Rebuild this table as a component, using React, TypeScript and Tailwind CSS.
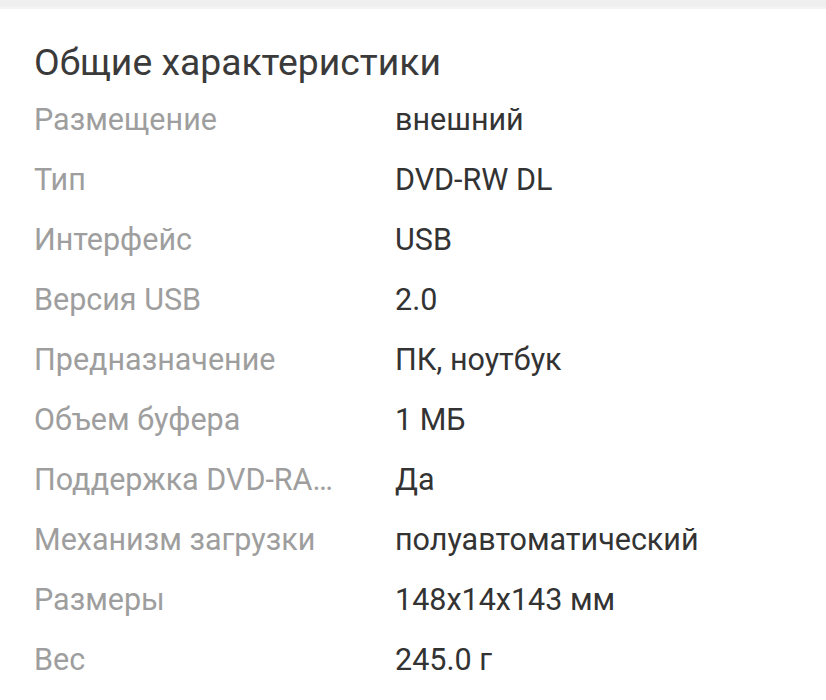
const rows: [string, string][] = [
  ["Размещение", "внешний"],
  ["Тип", "DVD-RW DL"],
  ["Интерфейс", "USB"],
  ["Версия USB", "2.0"],
  ["Предназначение", "ПК, ноутбук"],
  ["Объем буфера", "1 МБ"],
  ["Поддержка DVD-RAM", "Да"],
  ["Механизм загрузки", "полуавтоматический"],
  ["Размеры", "148x14x143 мм"],
  ["Вес", "245.0 г"],
];

export default function App() {
  return (
    <div className="w-[826px] h-[700px] bg-white overflow-hidden font-['Roboto',sans-serif]">
      <div className="h-[9px] bg-[#efefef] border-b-2 border-[#f4f4f4]" />
      <div className="pl-[34px] pt-[31px]">
        <h2 className="text-[37.3px] leading-[44px] text-[#3a3a3a]">Общие характеристики</h2>
        <div className="mt-[6px]">
          {rows.map(([label, value]) => (
            <div key={label} className="flex items-center h-[60px]">
              <div className="w-[300px] truncate text-[30.5px] text-[#9e9e9e]">{label}</div>
              <div className="ml-[61px] text-[30.5px] text-[#333333]">{value}</div>
            </div>
          ))}
        </div>
      </div>
    </div>
  );
}
